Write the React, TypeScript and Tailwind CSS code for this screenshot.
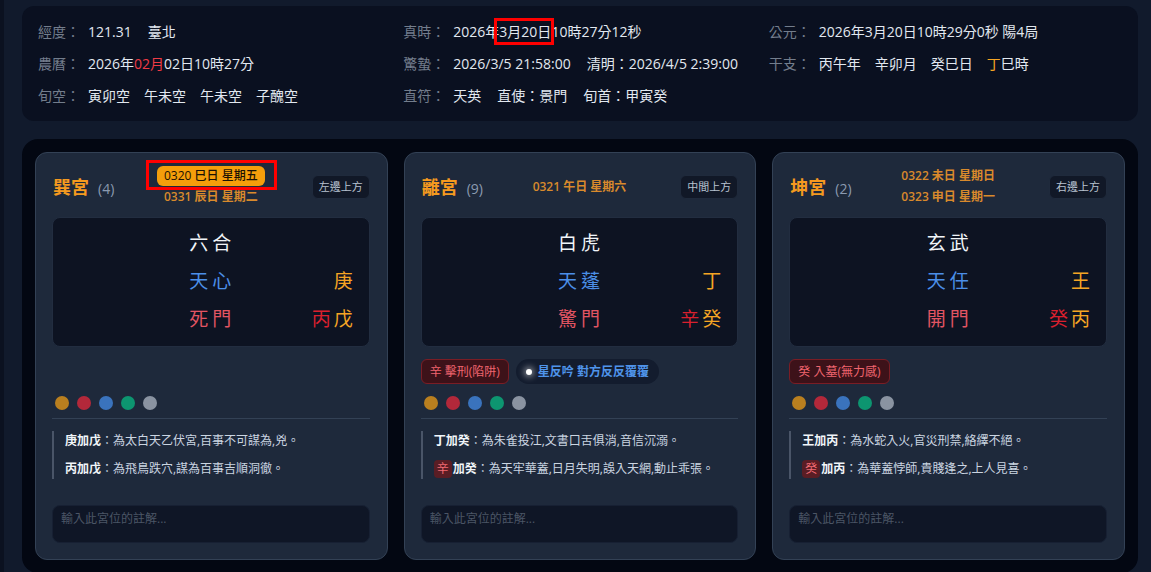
import React from 'react';

type Tone = 'red' | 'amber';
type Card = {
  name: string;
  num: string;
  dates: { t: string; hl?: boolean }[];
  pos: string;
  god: string;
  star: string;
  top: string;
  door: string;
  bottom: [string, Tone][];
  badges: { kind: 'red' | 'blue'; t: string }[];
  notes: { tag?: string; head: string; body: string }[];
};

const cards: Card[] = [
  {
    name: '巽宮',
    num: '(4)',
    dates: [{ t: '0320 巳日 星期五', hl: true }, { t: '0331 辰日 星期二' }],
    pos: '左邊上方',
    god: '六合',
    star: '天心',
    top: '庚',
    door: '死門',
    bottom: [
      ['丙', 'red'],
      ['戊', 'amber'],
    ],
    badges: [],
    notes: [
      { head: '庚加戊', body: '：為太白天乙伏宮,百事不可謀為,兇。' },
      { head: '丙加戊', body: '：為飛鳥跌穴,謀為百事吉順洞徹。' },
    ],
  },
  {
    name: '離宮',
    num: '(9)',
    dates: [{ t: '0321 午日 星期六' }],
    pos: '中間上方',
    god: '白虎',
    star: '天蓬',
    top: '丁',
    door: '驚門',
    bottom: [
      ['辛', 'red'],
      ['癸', 'amber'],
    ],
    badges: [
      { kind: 'red', t: '辛 擊刑(陷阱)' },
      { kind: 'blue', t: '星反吟 對方反反覆覆' },
    ],
    notes: [
      { head: '丁加癸', body: '：為朱雀投江,文書口舌俱消,音信沉溺。' },
      { tag: '辛', head: '加癸', body: '：為天牢華蓋,日月失明,誤入天網,動止乖張。' },
    ],
  },
  {
    name: '坤宮',
    num: '(2)',
    dates: [{ t: '0322 未日 星期日' }, { t: '0323 申日 星期一' }],
    pos: '右邊上方',
    god: '玄武',
    star: '天任',
    top: '王',
    door: '開門',
    bottom: [
      ['癸', 'red'],
      ['丙', 'amber'],
    ],
    badges: [{ kind: 'red', t: '癸 入墓(無力感)' }],
    notes: [
      { head: '王加丙', body: '：為水蛇入火,官災刑禁,絡繹不絕。' },
      { tag: '癸', head: '加丙', body: '：為華蓋悖師,貴賤逢之,上人見喜。' },
    ],
  },
];

function Label({ children }: { children: React.ReactNode }) {
  return <span className="w-[50px] shrink-0 text-[#737d8c]">{children}</span>;
}

function InfoRow({ label, children }: { label: string; children: React.ReactNode }) {
  return (
    <div className="flex h-5 items-center leading-5">
      <Label>{label}</Label>
      <div className="flex items-center text-[#e2e8f0]">{children}</div>
    </div>
  );
}

function PalaceCard({ c }: { c: Card }) {
  return (
    <div className="flex flex-col rounded-xl border border-[#334155] bg-[#1e293b] pb-4 pl-[16px] pr-[17px] pt-[13px]">
      <div className="grid h-[41px] grid-cols-3 items-center">
        <div className="flex items-baseline pl-px">
          <span className="text-[18px] font-bold leading-6 text-[#f59a1f]">{c.name}</span>
          <span className="ml-[9px] text-[14px] text-[#8b9ab0]">{c.num}</span>
        </div>
        <div className="flex flex-col items-center gap-px whitespace-nowrap">
          {c.dates.map((d, i) =>
            d.hl ? (
              <span key={i} className="relative">
                <span className="block rounded-md bg-[#f59e0b] px-[7px] text-[12px] font-medium leading-5 text-[#1c1204]">
                  {d.t}
                </span>
                <span className="absolute bottom-[-4px] left-[-11px] right-[-12px] top-[-6px] border-[3px] border-[#ff0000]" />
              </span>
            ) : (
              <span key={i} className="text-[12px] font-semibold leading-5 text-[#d98a2c]">
                {d.t}
              </span>
            )
          )}
        </div>
        <div className="flex justify-end">
          <span className="rounded-md border border-[#1f2a3c] bg-[#111827] px-[6px] py-[3px] text-[11px] leading-4 text-[#b8c2d0]">
            {c.pos}
          </span>
        </div>
      </div>

      <div className="mt-[10px] rounded-lg border border-[#222d40] bg-[#0d1322] pb-[8px] pt-[6px] text-[19px]">
        <div className="grid h-[38px] grid-cols-3 items-center">
          <div />
          <div className="pl-[3px] text-center tracking-[4px] text-[#f1f5f9]">{c.god}</div>
          <div />
        </div>
        <div className="grid h-[38px] grid-cols-3 items-center">
          <div />
          <div className="pl-[3px] text-center tracking-[4px] text-[#4b8fe8]">{c.star}</div>
          <div className="pr-4 text-right text-[#f5a524]">{c.top}</div>
        </div>
        <div className="grid h-[38px] grid-cols-3 items-center">
          <div />
          <div className="pl-[3px] text-center tracking-[4px] text-[#e25563]">{c.door}</div>
          <div className="flex justify-end gap-[3px] pr-4">
            {c.bottom.map(([ch, tone], i) => (
              <span key={i} className={tone === 'red' ? 'text-[#d9202e]' : 'text-[#f5a524]'}>
                {ch}
              </span>
            ))}
          </div>
        </div>
      </div>

      <div className="mt-[12px] flex h-[25px] items-center gap-[7px]">
        {c.badges.map((b, i) =>
          b.kind === 'red' ? (
            <span
              key={i}
              className="flex h-[25px] items-center rounded-md border border-[#7a1d25] bg-[#3d1219] px-[8px] text-[12px] text-[#f0656f]"
            >
              {b.t}
            </span>
          ) : (
            <span
              key={i}
              className="flex h-[25px] items-center gap-[6px] rounded-full bg-[#131c2e] px-[10px] text-[12px] font-semibold text-[#4f94ea]"
            >
              <span className="h-[6px] w-[6px] rounded-full bg-white shadow-[0_0_6px_2px_rgba(255,255,255,0.5)]" />
              {b.t}
            </span>
          )
        )}
      </div>

      <div className="mt-[12px] flex gap-2 pl-[3px]">
        {['#b97f1f', '#b3283a', '#3a73bd', '#0d9570', '#8a93a1'].map((col) => (
          <span key={col} className="h-[14px] w-[14px] rounded-full" style={{ backgroundColor: col }} />
        ))}
      </div>

      <div className="mt-2 border-t border-[#334155]" />

      <div className="mt-3 flex flex-col gap-2 border-l-2 border-[#4a5568] pl-[11px] text-[12px] leading-5">
        {c.notes.map((n, i) => (
          <div key={i} className="flex items-center whitespace-nowrap">
            {n.tag && (
              <span className="mr-px rounded-[4px] bg-[#5a1d24] px-[3px] text-[12px] leading-[18px] text-[#f26b73]">
                {n.tag}
              </span>
            )}
            <span className="font-semibold text-[#f1f5f9]">{n.head}</span>
            <span className="text-[#cbd5e1]">{n.body}</span>
          </div>
        ))}
      </div>

      <div className="mt-[26px] h-[38px] rounded-lg border border-[#172033] bg-[#0f1626] px-2 pt-[5px] text-[12px] leading-4 text-[#4b5565]">
        輸入此宮位的註解...
      </div>
    </div>
  );
}

export default function App() {
  return (
    <div className="min-h-screen overflow-hidden border-l-4 border-[#0b1120] bg-[#111a2c] pl-[18px] pr-[13px] pt-[6px] font-['Open_Sans','Noto_Sans_CJK_TC',sans-serif] text-[14px]">
      <div className="grid h-[115px] grid-cols-3 gap-x-3 rounded-xl bg-[#0a1020] px-4 py-4">
        <div className="flex flex-col gap-3">
          <InfoRow label="經度：">
            <span>121.31</span>
            <span className="ml-4">臺北</span>
          </InfoRow>
          <InfoRow label="農曆：">
            <span>2026年</span>
            <span className="text-[#ef3b45]">02月</span>
            <span>02日10時27分</span>
          </InfoRow>
          <InfoRow label="旬空：">
            <span className="flex gap-[14px]">
              <span>寅卯空</span>
              <span>午未空</span>
              <span>午未空</span>
              <span>子醜空</span>
            </span>
          </InfoRow>
        </div>
        <div className="flex flex-col gap-3">
          <InfoRow label="真時：">
            <span>2026年</span>
            <span className="relative">
              3月20日
              <span className="absolute bottom-[-3px] left-[-5px] right-[-3px] top-[-4px] border-[3px] border-[#ff0000]" />
            </span>
            <span>10時27分12秒</span>
          </InfoRow>
          <InfoRow label="驚蟄：">
            <span>2026/3/5 21:58:00</span>
            <span className="ml-4">清明：2026/4/5 2:39:00</span>
          </InfoRow>
          <InfoRow label="直符：">
            <span>天英</span>
            <span className="ml-4">直使：景門</span>
            <span className="ml-4">旬首：甲寅癸</span>
          </InfoRow>
        </div>
        <div className="flex flex-col gap-3">
          <InfoRow label="公元：">
            <span>2026年3月20日10時29分0秒 陽4局</span>
          </InfoRow>
          <InfoRow label="干支：">
            <span className="flex gap-[14px]">
              <span>丙午年</span>
              <span>辛卯月</span>
              <span>癸巳日</span>
              <span>
                <span className="text-[#f5a524]">丁</span>巳時
              </span>
            </span>
          </InfoRow>
        </div>
      </div>

      <div className="mt-[18px] rounded-2xl bg-[#030712] p-[13px]">
        <div className="grid grid-cols-3 gap-4">
          {cards.map((c) => (
            <PalaceCard key={c.name} c={c} />
          ))}
        </div>
      </div>
    </div>
  );
}
